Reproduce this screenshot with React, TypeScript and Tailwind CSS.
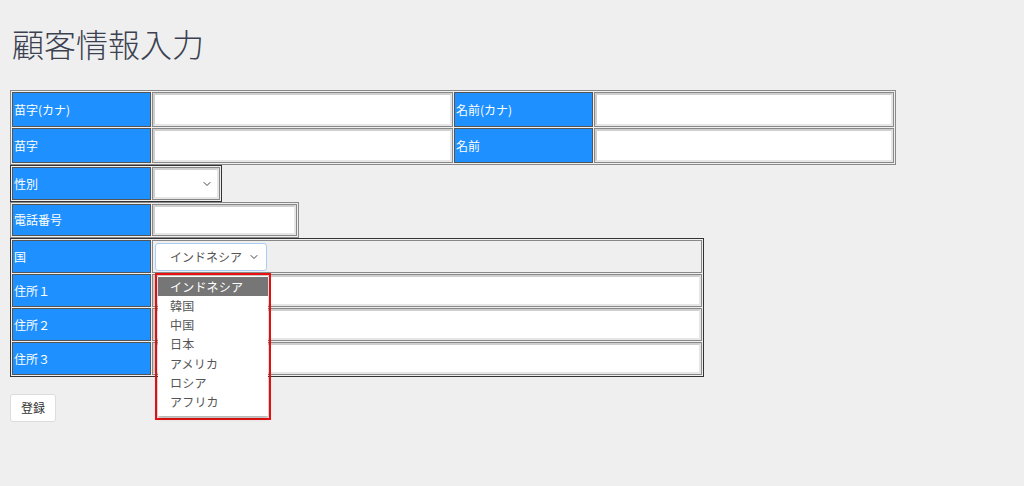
import { ChevronDown } from 'lucide-react';

const font = { fontFamily: '"Noto Sans CJK JP", "Noto Sans", sans-serif' };

const Label = ({ text }: { text: string }) => (
  <td className="w-[139px] border border-[#555] bg-[#1e90ff] pl-[1px] text-[12px] text-white align-middle">
    {text}
  </td>
);

const InputCell = ({ w, h }: { w: string; h: string }) => (
  <td className={`${w} border border-[#888] p-0`}>
    <input className={`block ${h} w-full border-2 border-[#e6e6e6] border-t-[#cfcfcf] border-l-[#cfcfcf] bg-white outline-none`} />
  </td>
);

const countries = ['インドネシア', '韓国', '中国', '日本', 'アメリカ', 'ロシア', 'アフリカ'];

export default function App() {
  return (
    <div className="min-h-[486px] w-full bg-[#efefef] px-[10px] pt-[24px]" style={font}>
      <h1 className="mb-[28px] pl-[2px] text-[32px] font-light leading-[38px] text-[#3b4150]">顧客情報入力</h1>

      {/* 苗字・名前 */}
      <table className="border-separate border-spacing-[1px] border border-[#8a8a8a]">
        <tbody>
          <tr className="h-[35px]">
            <Label text="苗字(カナ)" />
            <InputCell w="w-[301px]" h="h-[33px]" />
            <Label text="名前(カナ)" />
            <InputCell w="w-[300px]" h="h-[33px]" />
          </tr>
          <tr className="h-[35px]">
            <Label text="苗字" />
            <InputCell w="w-[301px]" h="h-[33px]" />
            <Label text="名前" />
            <InputCell w="w-[300px]" h="h-[33px]" />
          </tr>
        </tbody>
      </table>

      {/* 性別 */}
      <table className="border-separate border-spacing-[1px] border border-[#333]">
        <tbody>
          <tr className="h-[33px]">
            <Label text="性別" />
            <td className="w-[68px] border border-[#888] p-0">
              <div className="flex h-[31px] w-full items-center justify-end border-2 border-[#e6e6e6] border-t-[#cfcfcf] border-l-[#cfcfcf] bg-white pr-[4px]">
                <ChevronDown size={12} strokeWidth={2} className="text-[#444]" />
              </div>
            </td>
          </tr>
        </tbody>
      </table>

      {/* 電話番号 */}
      <table className="border-separate border-spacing-[1px] border border-[#8a8a8a]">
        <tbody>
          <tr className="h-[32px]">
            <Label text="電話番号" />
            <InputCell w="w-[145px]" h="h-[30px]" />
          </tr>
        </tbody>
      </table>

      {/* 国・住所 */}
      <table className="border-separate border-spacing-[1px] border border-[#333]">
        <tbody>
          <tr className="h-[33px]">
            <Label text="国" />
            <td className="w-[550px] border border-[#888] bg-[#efefef] p-0 align-middle">
              <div className="relative ml-[2px] w-[112px]">
                <div className="flex h-[28px] items-center justify-between rounded-[3px] border border-[#a9cdf3] bg-white pl-[14px] pr-[6px] text-[12px] text-[#555]">
                  <span>インドネシア</span>
                  <ChevronDown size={12} strokeWidth={2} className="text-[#444]" />
                </div>
                {/* dropdown */}
                <div className="absolute left-0 top-[30px] z-10 h-[147px] w-[116px] border-2 border-[#ee1111]">
                  <div className="mx-[1px] mt-[1px] bg-white pb-[4px] pt-[1px] shadow-[0_2px_4px_rgba(0,0,0,0.3)]">
                    {countries.map((c, i) => (
                      <div
                        key={c}
                        className={`h-[19.3px] pl-[12px] text-[12px] leading-[19px] tracking-[0.2px] ${i === 0 ? 'bg-[#767676] text-white' : 'text-[#555]'}`}
                      >
                        {c}
                      </div>
                    ))}
                  </div>
                </div>
              </div>
            </td>
          </tr>
          {['住所１', '住所２', '住所３'].map((t) => (
            <tr key={t} className="h-[33px]">
              <Label text={t} />
              <InputCell w="w-[550px]" h="h-[31px]" />
            </tr>
          ))}
        </tbody>
      </table>

      <button className="mt-[17px] h-[28px] w-[46px] rounded-[3px] border border-[#dcdcdc] bg-white text-[12px] text-[#333]">
        登録
      </button>
    </div>
  );
}
